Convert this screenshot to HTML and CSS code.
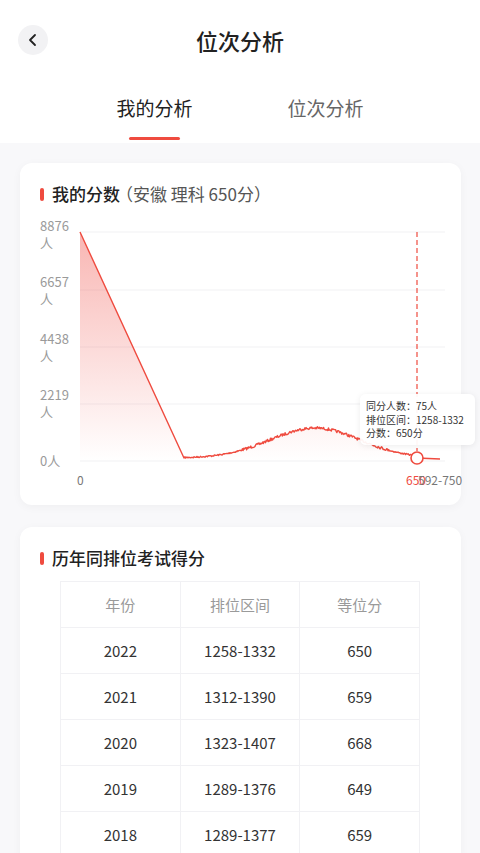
FILE: index.html
```html
<!DOCTYPE html>
<html lang="zh-CN">
<head>
    <meta charset="UTF-8">
    <meta name="viewport" content="width=device-width, initial-scale=1.0">
    <title>位次分析</title>
    <link rel="stylesheet" href="styles.css">
</head>
<body>
    <header class="nav">
        <button class="back-btn" type="button">
            <svg width="14" height="14" viewBox="0 0 14 14"><path d="M9 2 L4 7 L9 12" fill="none" stroke="#222" stroke-width="1.8" stroke-linecap="round" stroke-linejoin="round"/></svg>
        </button>
        <h1 class="nav-title">位次分析</h1>
    </header>

    <nav class="tabs">
        <div class="tab active">
            <span class="tab-text">我的分析</span>
            <span class="tab-bar"></span>
        </div>
        <div class="tab">
            <span class="tab-text">位次分析</span>
            <span class="tab-bar"></span>
        </div>
    </nav>

    <main class="page">
        <section class="card">
            <h2 class="card-title"><span class="mark"></span><b>我的分数</b><span class="sub">（安徽 理科 650分）</span></h2>
            <div class="chart">
                <svg class="chart-svg" width="401" height="283" viewBox="0 0 401 283">
                    <defs>
                        <linearGradient id="areaFill" x1="0" y1="0" x2="0" y2="1">
                            <stop offset="0" stop-color="#f0514a" stop-opacity="0.42"/>
                            <stop offset="1" stop-color="#f0514a" stop-opacity="0"/>
                        </linearGradient>
                    </defs>
                    <g class="grid">
                        <line x1="40" y1="20" x2="405" y2="20"/>
                        <line x1="40" y1="78" x2="405" y2="78"/>
                        <line x1="40" y1="135" x2="405" y2="135"/>
                        <line x1="40" y1="192" x2="405" y2="192"/>
                        <line x1="40" y1="249" x2="405" y2="249"/>
                    </g>
                    <g class="y-labels">
                        <text x="0" y="19">8876</text><text x="0" y="36">人</text>
                        <text x="0" y="75">6657</text><text x="0" y="92">人</text>
                        <text x="0" y="132">4438</text><text x="0" y="149">人</text>
                        <text x="0" y="188">2219</text><text x="0" y="205">人</text>
                        <text x="0" y="254">0人</text>
                    </g>
                    <path id="area" fill="url(#areaFill)" d=""/>
                    <path id="line" fill="none" stroke="#ef4b3f" stroke-width="1.4" stroke-linejoin="round" d=""/>
                    <line class="marker" x1="377" y1="20" x2="377" y2="239"/>
                    <circle cx="377" cy="246" r="6" fill="#fff" stroke="#ef4b3f" stroke-width="1.6"/>
                    <g class="x-labels">
                        <text x="37" y="273">0</text>
                        <text x="366" y="273" class="hl">650</text>
                        <text x="378" y="273">592-750</text>
                    </g>
                </svg>
                <div class="tooltip">
                    <div>同分人数：75人</div>
                    <div>排位区间：1258-1332</div>
                    <div>分数：650分</div>
                </div>
            </div>
        </section>

        <section class="card">
            <h2 class="card-title"><span class="mark"></span><b>历年同排位考试得分</b></h2>
            <table class="rank-table">
                <thead>
                    <tr><th>年份</th><th>排位区间</th><th>等位分</th></tr>
                </thead>
                <tbody>
                    <tr><td>2022</td><td>1258-1332</td><td>650</td></tr>
                    <tr><td>2021</td><td>1312-1390</td><td>659</td></tr>
                    <tr><td>2020</td><td>1323-1407</td><td>668</td></tr>
                    <tr><td>2019</td><td>1289-1376</td><td>649</td></tr>
                    <tr><td>2018</td><td>1289-1377</td><td>659</td></tr>
                </tbody>
            </table>
        </section>
    </main>

    <script>
        // build the score distribution line (chart coords: page x - 40, page y - 212)
        let seed = 7;
        function rand() {
            seed = (seed * 16807) % 2147483647;
            return seed / 2147483647 - 0.5;
        }

        const pts = [[40, 20], [144, 246]];
        for (let x = 145; x <= 377; x += 0.7) {
            const bump = 30 * Math.exp(-Math.pow(x - 275, 2) / 4050);
            const noise = rand() * (bump > 8 ? 2.8 : 1.4);
            pts.push([x, 246 - bump + noise]);
        }
        pts.push([377, 246], [400, 247]);

        const d = pts.map((p, i) => (i ? 'L' : 'M') + p[0].toFixed(1) + ' ' + p[1].toFixed(1)).join(' ');
        document.getElementById('line').setAttribute('d', d);
        document.getElementById('area').setAttribute('d', d + ' L400 249 L40 249 Z');
    </script>
</body>
</html>
```

FILE: styles.css
```css
:root {
    --theme-red: #ef4b3f;
    --text-main: #222;
    --text-sub: #555;
    --text-muted: #9a9a9a;
    --line: #f1f1f4;
    --page-bg: #f8f8fa;
}

body {
    margin: 0;
    background-color: #fff;
    font-family: "Noto Sans CJK SC", "Noto Sans", sans-serif;
    color: var(--text-main);
}

.nav {
    height: 80px;
    display: flex;
    align-items: center;
    justify-content: center;
    position: relative;
}

.back-btn {
    position: absolute;
    left: 18px;
    top: 25px;
    width: 30px;
    height: 30px;
    border: none;
    border-radius: 50%;
    background-color: #f2f2f4;
    display: flex;
    align-items: center;
    justify-content: center;
    padding: 0;
}

.nav-title {
    margin: 0;
    font-size: 22px;
    font-weight: 500;
    line-height: 30px;
}

.tabs {
    height: 63px;
    display: flex;
    justify-content: center;
}

.tab {
    width: 171px;
    display: flex;
    flex-direction: column;
    align-items: center;
    padding-top: 15px;
    box-sizing: border-box;
}

.tab-text {
    font-size: 19px;
    line-height: 26px;
    color: #666;
}

.tab.active .tab-text {
    color: var(--text-main);
}

.tab-bar {
    margin-top: 16px;
    width: 51px;
    height: 3px;
    border-radius: 2px;
}

.tab.active .tab-bar {
    background-color: var(--theme-red);
}

.page {
    background-color: var(--page-bg);
    padding: 20px 19px 0 20px;
    display: flex;
    flex-direction: column;
    gap: 22px;
    min-height: 700px;
}

.card {
    background-color: #fff;
    border-radius: 12px;
    box-shadow: 0 2px 10px rgba(0, 0, 0, 0.04);
    padding: 20px 20px 10px;
}

.card-title {
    margin: 0;
    display: flex;
    align-items: center;
    font-size: 17px;
    line-height: 22px;
    font-weight: normal;
}

.card-title b {
    font-weight: 500;
    color: var(--text-main);
}

.card-title .sub {
    color: var(--text-sub);
    margin-left: -4px;
}

.mark {
    width: 4px;
    height: 13px;
    border-radius: 2px;
    background-color: var(--theme-red);
    margin-right: 8px;
}

.chart {
    position: relative;
    margin-top: 7px;
    height: 283px;
}

.chart-svg {
    display: block;
    overflow: visible;
    font-family: "Noto Sans CJK SC", "Noto Sans", sans-serif;
}

.grid line {
    stroke: #f1f1f3;
    stroke-width: 1;
}

.y-labels text {
    font-size: 13px;
    fill: var(--text-muted);
}

.x-labels text {
    font-size: 12px;
    fill: #777;
}

.x-labels .hl {
    fill: var(--theme-red);
}

.marker {
    stroke: var(--theme-red);
    stroke-width: 1.2;
    stroke-dasharray: 5 3;
}

.tooltip {
    position: absolute;
    left: 320px;
    top: 182px;
    width: 115px;
    padding: 5px 0 5px 6px;
    box-sizing: border-box;
    background-color: rgba(255, 255, 255, 0.94);
    border-radius: 6px;
    box-shadow: 0 1px 6px rgba(0, 0, 0, 0.08);
    font-size: 10px;
    line-height: 13.5px;
    color: #333;
    white-space: nowrap;
}

.rank-table {
    margin: 12px 0 0 20px;
    width: 360px;
    table-layout: fixed;
    border-collapse: collapse;
    font-size: 15px;
    text-align: center;
}

.rank-table th,
.rank-table td {
    width: 33.33%;
    border: 1px solid var(--line);
    height: 45px;
    padding: 0;
}

.rank-table th {
    font-weight: normal;
    color: var(--text-muted);
}

.rank-table td {
    color: #333;
}
```
